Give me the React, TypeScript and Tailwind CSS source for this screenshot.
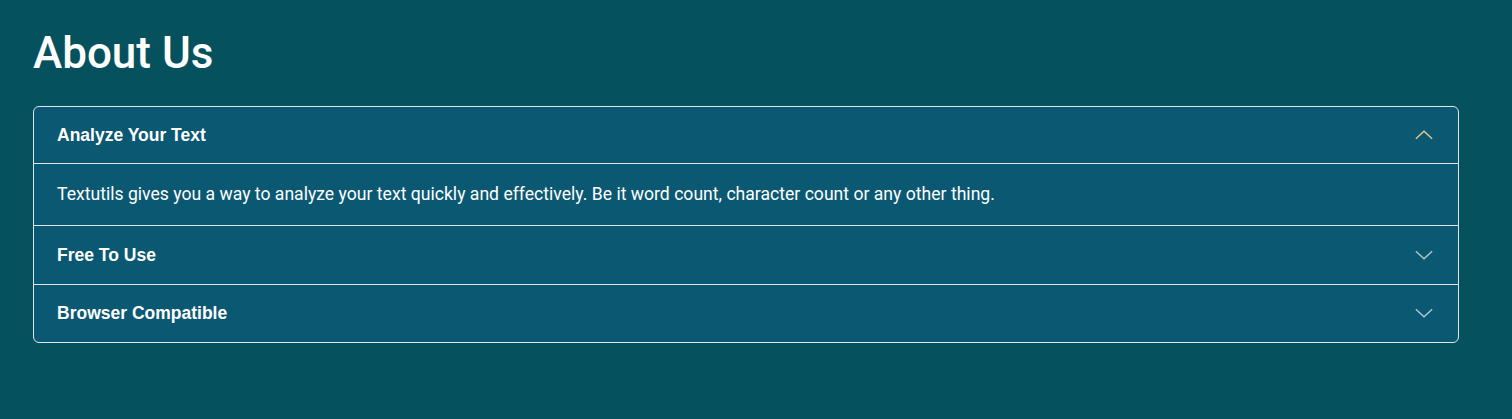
import React, { useState } from 'react'

const items = [
  {
    title: 'Analyze Your Text',
    body: 'Textutils gives you a way to analyze your text quickly and effectively. Be it word count, character count or any other thing.',
  },
  {
    title: 'Free To Use',
    body: 'TextUtils is a free character counter tool that provides instant character count & word count statistics for a given text.',
  },
  {
    title: 'Browser Compatible',
    body: 'This word counter software works in any web browsers such as Chrome, Firefox, Internet Explorer, Safari, Opera.',
  },
]

const heights = ['h-[56px]', 'h-[58px]', 'h-[57px]']

const Chevron = ({ open }: { open: boolean }) => (
  <svg width="20" height="20" viewBox="0 0 16 16" fill="none" className={open ? 'rotate-180' : ''}>
    <path d="M1.5 5L8 11L14.5 5" stroke={open ? '#e9c98c' : '#b6c8d3'} strokeWidth="1.1" />
  </svg>
)

const App = () => {
  const [open, setOpen] = useState(0)

  return (
    <div className="min-h-screen w-full bg-[#05525e] pl-[33px] pr-[53px] pt-[27px] text-white font-['Roboto',sans-serif]">
      <h1 className="text-[44px] font-medium leading-[1.2] mb-[26px]">About Us</h1>
      <div className="border border-[#dfe5ea] rounded-[6px] overflow-hidden bg-[#0b5873]">
        {items.map((item, idx) => (
          <div key={idx} className={idx > 0 ? 'border-t border-[#dfe5ea]' : ''}>
            <button
              className={`w-full flex items-center justify-between ${heights[idx]} pl-[23px] pr-[24px] text-left font-['Liberation_Sans',Arial,sans-serif] font-bold text-[17.5px]`}
              onClick={() => setOpen(open === idx ? -1 : idx)}
            >
              <span>{item.title}</span>
              <Chevron open={open === idx} />
            </button>
            {open === idx && (
              <div className="border-t border-[#dfe5ea] h-[62px] flex items-center pl-[23px] pr-[22px] text-[17.6px] leading-6">
                {item.body}
              </div>
            )}
          </div>
        ))}
      </div>
    </div>
  )
}

export default App
